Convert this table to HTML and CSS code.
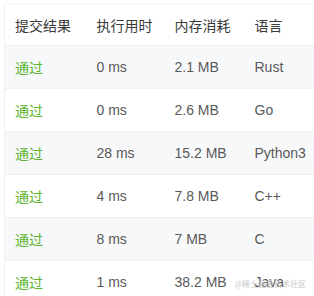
FILE: index.html
```html
<!DOCTYPE html>
<html lang="zh">
<head>
<meta charset="utf-8">
<link rel="stylesheet" href="styles.css">
</head>
<body>
<div class="wrap">
  <table class="subs">
    <colgroup>
      <col class="c1"><col class="c2"><col class="c3"><col class="c4">
    </colgroup>
    <thead>
      <tr><th>提交结果</th><th>执行用时</th><th>内存消耗</th><th>语言</th></tr>
    </thead>
    <tbody>
      <tr class="alt"><td class="ok">通过</td><td>0 ms</td><td>2.1 MB</td><td>Rust</td></tr>
      <tr><td class="ok">通过</td><td>0 ms</td><td>2.6 MB</td><td>Go</td></tr>
      <tr class="alt"><td class="ok">通过</td><td>28 ms</td><td>15.2 MB</td><td>Python3</td></tr>
      <tr><td class="ok">通过</td><td>4 ms</td><td>7.8 MB</td><td>C++</td></tr>
      <tr class="alt"><td class="ok">通过</td><td>8 ms</td><td>7 MB</td><td>C</td></tr>
      <tr><td class="ok">通过</td><td>1 ms</td><td>38.2 MB</td><td>Java</td></tr>
    </tbody>
  </table>
  <div class="mark">@稀土掘金技术社区</div>
</div>
</body>
</html>
```
FILE: styles.css
```css
html, body {
  margin: 0;
  padding: 0;
  background: #ffffff;
}
body {
  font-family: "Liberation Sans", "Noto Sans CJK SC", sans-serif;
  font-size: 14px;
  color: #595959;
  width: 314px;
  height: 296px;
  overflow: hidden;
}
.wrap {
  position: relative;
  padding: 3px 0 0 4px;
}
.subs {
  border-collapse: collapse;
  width: 310px;
  border-left: 1px solid #f0f0f0;
  border-top: 1px solid #f5f5f5;
  table-layout: fixed;
}
.c1 { width: 82px; }
.c2 { width: 78px; }
.c3 { width: 80px; }
.subs th, .subs td {
  text-align: left;
  padding: 0 0 0 10px;
  white-space: nowrap;
}
.subs th {
  height: 41px;
  font-weight: normal;
  color: #3a3a3a;
  font-family: "Noto Sans CJK SC", sans-serif;
  border-bottom: 1px solid #eeeeee;
}
.subs td {
  height: 42px;
  border-bottom: 1px solid #f0f0f0;
}
.subs tr.alt td {
  background: #f7f8fa;
}
.subs td.ok {
  color: #5cb52e;
  font-family: "Noto Sans CJK SC", sans-serif;
}
.mark {
  position: absolute;
  right: 8px;
  top: 278px;
  font-family: "Noto Sans CJK SC", sans-serif;
  font-size: 8px;
  color: #c8c8c8;
  letter-spacing: 0;
}
```
